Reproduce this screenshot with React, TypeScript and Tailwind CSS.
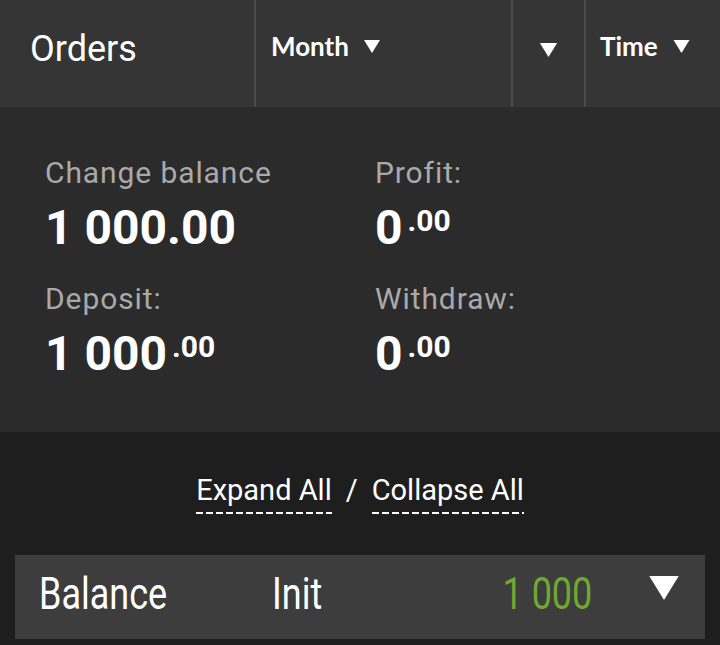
import React from "react";

function Arrow({ className }: { className: string }) {
  return (
    <svg viewBox="0 0 16 13" className={className}>
      <path d="M0 0H16L8 13Z" fill="white" />
    </svg>
  );
}

function Amount({ main, cents }: { main: string; cents?: string }) {
  return (
    <div className="flex items-start text-white font-bold text-[48px] leading-[46px]">
      <span>{main}</span>
      {cents && (
        <span className="ml-[5px] mt-[2px] text-[30px] leading-[28px]">{cents}</span>
      )}
    </div>
  );
}

function Stat({ label, main, cents }: { label: string; main: string; cents?: string }) {
  return (
    <div>
      <p className="text-[30px] leading-[32px] tracking-[0.9px] text-[#a9a9a9]">{label}</p>
      <div className="mt-[16px]">
        <Amount main={main} cents={cents} />
      </div>
    </div>
  );
}

export default function App() {
  return (
    <div className="w-[720px] h-[645px] overflow-hidden bg-[#1e1e1e] font-['Roboto',sans-serif]">
      {/* top bar */}
      <div className="flex h-[107px] bg-[#353535] text-white">
        <div className="w-[254px] pl-[30px] pt-[31px] text-[36px] leading-[36px]">Orders</div>
        <div className="w-[2px] bg-[#4b4b4b]" />
        <div className="w-[255px] flex items-start pl-[15px] pt-[33px] font-['Lato',sans-serif] font-bold text-[26px] leading-[26px]">
          <span>Month</span>
          <Arrow className="ml-[15px] mt-[7px] w-[16px] h-[13px]" />
        </div>
        <div className="w-[2px] bg-[#4b4b4b]" />
        <div className="w-[71px] flex justify-center pt-[43px]">
          <Arrow className="w-[19px] h-[14px]" />
        </div>
        <div className="w-[2px] bg-[#4b4b4b]" />
        <div className="flex-1 flex items-start pl-[14px] pt-[33px] font-['Lato',sans-serif] font-bold text-[26px] leading-[26px]">
          <span>Time</span>
          <Arrow className="ml-[15px] mt-[7px] w-[17px] h-[13px]" />
        </div>
      </div>

      {/* summary */}
      <div className="bg-[#2b2b2b] pt-[50px] pb-[55px] pl-[45px] grid grid-cols-[330px_1fr] gap-y-[32px]">
        <Stat label="Change balance" main="1 000.00" />
        <Stat label="Profit:" main="0" cents=".00" />
        <Stat label="Deposit:" main="1 000" cents=".00" />
        <Stat label="Withdraw:" main="0" cents=".00" />
      </div>

      {/* expand / collapse */}
      <div className="flex justify-center items-start pt-[42px] text-white text-[29px] leading-[32px]">
        <div>
          <span>Expand All</span>
          <div className="mt-[6px] h-[2px] bg-[repeating-linear-gradient(to_right,#ffffff_0_7px,transparent_7px_10px)]" />
        </div>
        <span className="mx-[14px]">/</span>
        <div>
          <span>Collapse All</span>
          <div className="mt-[6px] h-[2px] bg-[repeating-linear-gradient(to_right,#ffffff_0_7px,transparent_7px_10px)]" />
        </div>
      </div>

      {/* order row */}
      <div className="mx-[15px] mt-[41px] h-[84px] bg-[#3d3d3d] flex items-start pl-[24px] pt-[16px] text-[45px] leading-[45px] text-white">
        <div className="w-[233px]">
          <span className="inline-block origin-left scale-x-[0.8]">Balance</span>
        </div>
        <div className="flex-1">
          <span className="inline-block origin-left scale-x-[0.8]">Init</span>
        </div>
        <div className="text-[#71a832]">
          <span className="inline-block origin-right scale-x-[0.8]">1 000</span>
        </div>
        <Arrow className="ml-[54px] mr-[23px] mt-[5px] w-[36px] h-[24px]" />
      </div>
    </div>
  );
}
